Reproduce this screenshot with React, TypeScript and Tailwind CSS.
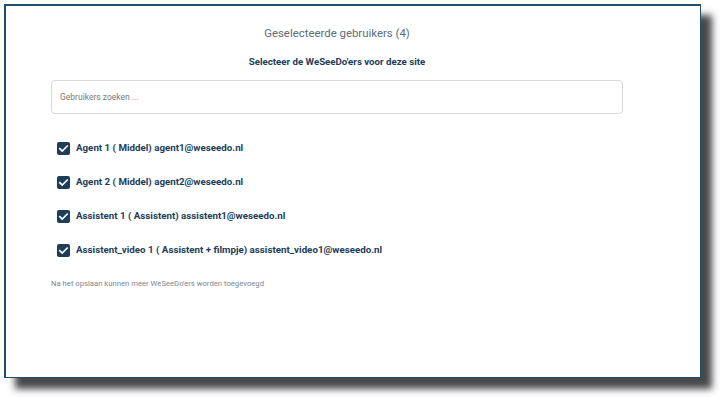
import React from "react";

const users = [
  "Agent 1 ( Middel) agent1@weseedo.nl",
  "Agent 2 ( Middel) agent2@weseedo.nl",
  "Assistent 1 ( Assistent) assistent1@weseedo.nl",
  "Assistent_video 1 ( Assistent + filmpje) assistent_video1@weseedo.nl",
];

function Check() {
  return (
    <span className="flex h-[13px] w-[13px] shrink-0 items-center justify-center rounded-[2px] bg-[#1d3d58]">
      <svg width="11" height="11" viewBox="0 0 12 12" fill="none">
        <path d="M2 6.2l2.6 2.6L10 3.4" stroke="white" strokeWidth="1.8" strokeLinecap="square" />
      </svg>
    </span>
  );
}

export default function App() {
  return (
    <div className="h-[397px] w-[720px] bg-white p-[4px] font-['Roboto',sans-serif]">
      <div className="flex h-[374px] w-[697px] flex-col border border-[#1f4d6a] border-l-2 border-t-2 bg-white pl-[45px] pr-[77px] shadow-[11px_11px_7px_rgba(40,40,44,0.85)]">
        <div className="mt-[19px] text-center text-[11.4px] leading-[16px] text-[#5d6e7b]">
          Geselecteerde gebruikers (4)
        </div>
        <div className="mt-[14px] text-center text-[9.7px] font-bold leading-[14px] text-[#1d3d58]">
          Selecteer de WeSeeDo'ers voor deze site
        </div>
        <div className="mt-[11px] flex h-[34px] items-center rounded-[4px] border border-[#d9d9d9] px-[8px] text-[8.5px] text-[#7a7a7a]">
          Gebruikers zoeken ...
        </div>
        <div className="mt-[27px] flex flex-col gap-[20px] pl-[6px]">
          {users.map((u) => (
            <div key={u} className="flex h-[14px] items-center gap-[6px]">
              <Check />
              <span className="text-[9.75px] font-bold leading-[14px] text-[#1d3d58]">{u}</span>
            </div>
          ))}
        </div>
        <div className="mt-[22px] text-[7.7px] leading-[10px] text-[#7c8790]">
          Na het opslaan kunnen meer WeSeeDo'ers worden toegevoegd
        </div>
      </div>
    </div>
  );
}
